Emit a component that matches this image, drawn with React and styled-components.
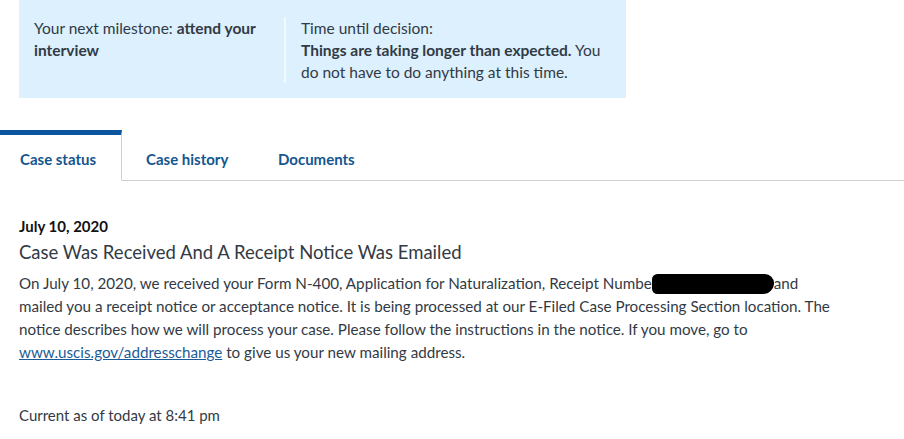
import React from "react";
import styled, { createGlobalStyle } from "styled-components";

const Global = createGlobalStyle`
  html, body { margin: 0; padding: 0; background: #fff; }
  body { font-family: Lato, "Liberation Sans", sans-serif; color: #323a45; }
`;

const Page = styled.div`
  width: 904px;
  height: 439px;
  overflow: hidden;
`;

const Summary = styled.div`
  margin-left: 19px;
  width: 607px;
  height: 98px;
  box-sizing: border-box;
  background: #dcf0fd;
  display: flex;
  align-items: flex-start;
  padding: 17px 0 0 15px;
  font-size: 15.5px;
  line-height: 22px;
`;

const SummaryCol = styled.div`
  width: ${(p) => p.$w}px;
  box-sizing: border-box;
  padding-left: ${(p) => (p.$divided ? 15 : 0)}px;
  border-left: ${(p) => (p.$divided ? "2px solid #f4f9fe" : "none")};
  min-height: 61px;
`;

const Tabs = styled.div`
  display: flex;
  margin-top: 32px;
  height: 51px;
`;

const Tab = styled.div`
  box-sizing: border-box;
  width: ${(p) => p.$w}px;
  padding-left: ${(p) => p.$pl}px;
  padding-top: 15px;
  font-size: 15px;
  font-weight: 700;
  color: #14568f;
  border-top: ${(p) => (p.$active ? "5px solid #0b559f" : "5px solid transparent")};
  border-right: ${(p) => (p.$active ? "1px solid #cfcfcf" : "none")};
  border-bottom: ${(p) => (p.$active ? "1px solid transparent" : "1px solid #cfcfcf")};
`;

const Filler = styled.div`
  flex: 1;
  border-bottom: 1px solid #cfcfcf;
`;

const Content = styled.div`
  padding: 36px 0 0 19px;
`;

const DateLine = styled.div`
  font-size: 15px;
  font-weight: 700;
  color: #111;
  line-height: 18px;
`;

const Heading = styled.h2`
  margin: 5px 0 0;
  font-size: 18.5px;
  font-weight: 400;
  line-height: 24px;
  color: #323a45;
`;

const Body = styled.p`
  margin: 8px 0 0;
  width: 812px;
  font-size: 15.2px;
  line-height: 23px;
`;

const Redacted = styled.span`
  display: inline-block;
  width: 122px;
  height: 20px;
  background: #000;
  border-radius: 6px 10px 12px 6px;
  vertical-align: -5px;
`;

const Link = styled.a`
  color: #1d5b97;
  text-decoration: underline;
`;

const Current = styled.div`
  margin-top: 40px;
  font-size: 15px;
  line-height: 22px;
`;

export default function App() {
  return (
    <Page>
      <Global />
      <Summary>
        <SummaryCol $w={250}>
          Your next milestone: <b>attend your interview</b>
        </SummaryCol>
        <SummaryCol $w={330} $divided>
          Time until decision:
          <br />
          <b>Things are taking longer than expected.</b> You do not have to do anything at this time.
        </SummaryCol>
      </Summary>
      <Tabs>
        <Tab $active $w={122} $pl={20}>Case status</Tab>
        <Tab $w={132} $pl={24}>Case history</Tab>
        <Tab $w={120} $pl={24}>Documents</Tab>
        <Filler />
      </Tabs>
      <Content>
        <DateLine>July 10, 2020</DateLine>
        <Heading>Case Was Received And A Receipt Notice Was Emailed</Heading>
        <Body>
          On July 10, 2020, we received your Form N-400, Application for Naturalization, Receipt Numbe
          <Redacted />
          and mailed you a receipt notice or acceptance notice. It is being processed at our E-Filed Case
          Processing Section location. The notice describes how we will process your case. Please follow the
          instructions in the notice. If you move, go to{" "}
          <Link href="#">www.uscis.gov/addresschange</Link> to give us your new mailing address.
        </Body>
        <Current>Current as of today at 8:41 pm</Current>
      </Content>
    </Page>
  );
}
